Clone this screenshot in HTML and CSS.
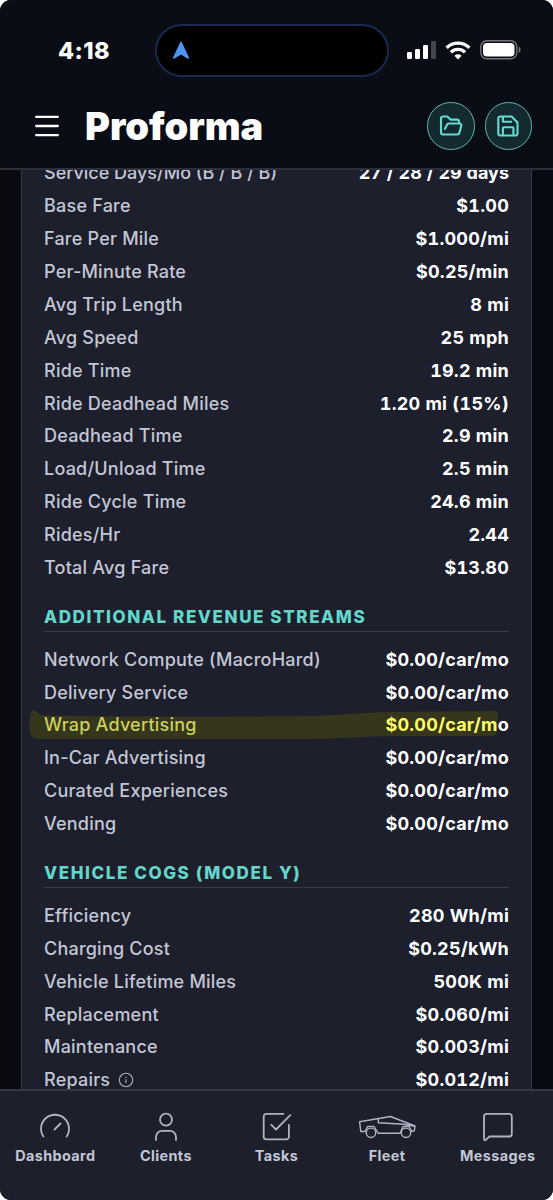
FILE: index.html
```html
<!DOCTYPE html>
<html lang="en">
<head>
  <meta charset="UTF-8">
  <title>Proforma</title>
  <link rel="stylesheet" href="styles.css">
</head>
<body>
  <div class="phone">
    <header class="top">
      <div class="status-bar">
        <span class="time">4:18</span>
        <div class="island">
          <svg width="18" height="19" viewBox="0 0 18 19"><path d="M9 1.4 L16.3 17 L9 12.6 L1.7 17 Z" fill="#4f94f8" stroke="#4f94f8" stroke-width="1.6" stroke-linejoin="round"/></svg>
        </div>
        <div class="indicators">
          <svg width="29" height="19" viewBox="0 0 29 19" fill="#fff">
            <rect x="0" y="11" width="5" height="7" rx="1.3"/>
            <rect x="8" y="8" width="5" height="10" rx="1.3"/>
            <rect x="16" y="4" width="5" height="14" rx="1.3"/>
            <rect x="24" y="0" width="5" height="18" rx="1.3" fill="#44464c"/>
          </svg>
          <svg class="wifi" width="26" height="19" viewBox="0 0 26 19" fill="none" stroke="#fff" stroke-width="3.4">
            <path d="M1.6 6.8 a16.3 16.3 0 0 1 22.8 0"/>
            <path d="M5.9 11.3 a10.2 10.2 0 0 1 14.2 0"/>
            <path d="M13 18.4 L9.4 14.7 a5.3 5.3 0 0 1 7.2 0 Z" fill="#fff" stroke="none"/>
          </svg>
          <svg width="41" height="20" viewBox="0 0 41 20">
            <rect x="0.8" y="0.8" width="36" height="18" rx="6" fill="none" stroke="#75777c" stroke-width="1.4"/>
            <rect x="3" y="3" width="31.5" height="13.6" rx="4" fill="#fff"/>
            <path d="M38.6 6.6 q2 1 2 3.2 t-2 3.2 z" fill="#75777c"/>
          </svg>
        </div>
      </div>
      <div class="title-bar">
        <svg class="menu" width="24" height="22" viewBox="0 0 24 22" stroke="#fff" stroke-width="2.3" stroke-linecap="round"><path d="M1.2 1.8 H22.8 M1.2 11 H22.8 M1.2 20.2 H22.8"/></svg>
        <h1>Proforma</h1>
        <div class="actions">
          <button class="round-btn" aria-label="Open">
            <svg width="24" height="24" viewBox="0 0 24 24"><path d="M5.2 20.5 H3.9 A1.9 1.9 0 0 1 2 18.6 V4.4 A1.9 1.9 0 0 1 3.9 2.5 H8.3 L11.5 5.6 H18.1 A1.9 1.9 0 0 1 20 7.5 V9.5 M5.2 20.5 H18.3 A2.2 2.2 0 0 0 20.4 18.9 L22.3 11.5 A1.6 1.6 0 0 0 20.7 9.5 H9.9 A2.2 2.2 0 0 0 7.9 10.9 L5.9 14.8"/></svg>
          </button>
          <button class="round-btn" aria-label="Save">
            <svg width="24" height="24" viewBox="0 0 24 24"><path d="M4.4 2.5 H15.6 L21.5 8.4 V19.4 A2.1 2.1 0 0 1 19.4 21.5 H4.4 A2.1 2.1 0 0 1 2.3 19.4 V4.6 A2.1 2.1 0 0 1 4.4 2.5 Z M6.9 2.5 V7.7 H15.2 M6.9 21.5 V14.2 A1 1 0 0 1 7.9 13.2 H16.4 A1 1 0 0 1 17.4 14.2 V21.5"/></svg>
          </button>
        </div>
      </div>
    </header>

    <main class="content">
      <section class="card">
        <div class="row tight"><span>Service Days/Mo (B / B / B)</span><b>27 / 28 / 29 days</b></div>
        <div class="row"><span>Base Fare</span><b>$1.00</b></div>
        <div class="row"><span>Fare Per Mile</span><b>$1.000/mi</b></div>
        <div class="row"><span>Per-Minute Rate</span><b>$0.25/min</b></div>
        <div class="row"><span>Avg Trip Length</span><b>8 mi</b></div>
        <div class="row"><span>Avg Speed</span><b>25 mph</b></div>
        <div class="row"><span>Ride Time</span><b>19.2 min</b></div>
        <div class="row"><span>Ride Deadhead Miles</span><b>1.20 mi (15%)</b></div>
        <div class="row"><span>Deadhead Time</span><b>2.9 min</b></div>
        <div class="row"><span>Load/Unload Time</span><b>2.5 min</b></div>
        <div class="row"><span>Ride Cycle Time</span><b>24.6 min</b></div>
        <div class="row"><span>Rides/Hr</span><b>2.44</b></div>
        <div class="row"><span>Total Avg Fare</span><b>$13.80</b></div>

        <h2>ADDITIONAL REVENUE STREAMS</h2>
        <div class="row"><span>Network Compute (MacroHard)</span><b>$0.00/car/mo</b></div>
        <div class="row"><span>Delivery Service</span><b>$0.00/car/mo</b></div>
        <div class="row marked">
          <svg class="marker" width="472" height="32" viewBox="0 0 472 32"><path d="M1 23 C0 16 1 4 3 2 C6 0 9 3 11 6 C60 8 180 8 280 7 C320 6 330 3 370 3 L466 2 Q470 3 469 8 L468 24 Q467 27 462 27 L370 27 C330 27 320 30 280 30 L10 30 Q2 30 1 23 Z"/></svg>
          <span>Wrap Advertising</span><b><em>$0.00/car/m</em>o</b>
        </div>
        <div class="row"><span>In-Car Advertising</span><b>$0.00/car/mo</b></div>
        <div class="row"><span>Curated Experiences</span><b>$0.00/car/mo</b></div>
        <div class="row"><span>Vending</span><b>$0.00/car/mo</b></div>

        <h2>VEHICLE COGS (MODEL Y)</h2>
        <div class="row"><span>Efficiency</span><b>280 Wh/mi</b></div>
        <div class="row"><span>Charging Cost</span><b>$0.25/kWh</b></div>
        <div class="row"><span>Vehicle Lifetime Miles</span><b>500K mi</b></div>
        <div class="row"><span>Replacement</span><b>$0.060/mi</b></div>
        <div class="row"><span>Maintenance</span><b>$0.003/mi</b></div>
        <div class="row">
          <span>Repairs <svg class="info" width="16" height="16" viewBox="0 0 16 16" fill="none" stroke="#a9abba" stroke-width="1.1"><circle cx="8" cy="8" r="6.7"/><path d="M8 7.3 V11 M8 4.7 V5.9"/></svg></span>
          <b>$0.012/mi</b>
        </div>
      </section>
    </main>

    <nav class="tabs">
      <a class="tab">
        <svg width="32" height="30" viewBox="0 0 32 30"><path d="M4.4 24.6 A14 14 0 1 1 27.6 24.6 M15.5 17.5 L21.5 11.5"/></svg>
        Dashboard
      </a>
      <a class="tab">
        <svg width="32" height="30" viewBox="0 0 32 30"><circle cx="16" cy="7.7" r="6"/><path d="M6 28 V24.8 A6 6 0 0 1 12 18.8 H20 A6 6 0 0 1 26 24.8 V28"/></svg>
        Clients
      </a>
      <a class="tab">
        <svg width="32" height="30" viewBox="0 0 32 30"><path d="M23.5 1.8 H6.3 A2.6 2.6 0 0 0 3.7 4.4 V24.8 A2.6 2.6 0 0 0 6.3 27.4 H26.3 A2.6 2.6 0 0 0 28.9 24.8 V13 M11.3 12.8 L16 17.5 L30.3 3.2"/></svg>
        Tasks
      </a>
      <a class="tab">
        <svg class="truck" width="60" height="30" viewBox="0 0 60 30"><path d="M8 19.5 H3.8 L2.6 9.8 L33.5 4.5 L58 14 L57.3 18.8 L54.7 19.3 M21.3 7 V10.8 L47 12.3 L57.6 14.2 M8 19.5 L10.5 14.5 H17 L21.3 21.3 H43 L46 14.5 H52 L55 19.5"/><circle cx="14" cy="20.8" r="4.7"/><circle cx="49" cy="20.8" r="4.7"/></svg>
        Fleet
      </a>
      <a class="tab">
        <svg width="32" height="30" viewBox="0 0 32 30"><path d="M4.5 1.8 H27.3 A2.5 2.5 0 0 1 29.8 4.3 V22 A2.5 2.5 0 0 1 27.3 24.5 H7.5 L3.6 28.2 Q2 28.5 2 26.5 V4.3 A2.5 2.5 0 0 1 4.5 1.8 Z"/></svg>
        Messages
      </a>
    </nav>
  </div>
</body>
</html>
```

FILE: styles.css
```css
* { box-sizing: border-box; }
body {
  margin: 0;
  background: #fff;
  font-family: Inter, "Liberation Sans", sans-serif;
}
.phone {
  display: flex;
  flex-direction: column;
  height: 1200px;
  border-radius: 11px;
  overflow: hidden;
  background: linear-gradient(to right, #090a0c, #070a13 4%);
}

/* header */
.top {
  height: 170px;
  flex: none;
  background: #0a0d15;
  border-bottom: 2px solid #2c2e3b;
}
.status-bar {
  display: flex;
  align-items: center;
  height: 76px;
  padding: 24px 32px 0 58px;
}
.time {
  width: 97px;
  padding-top: 1px;
  font-size: 23.5px;
  font-weight: 800;
  letter-spacing: 0.4px;
  color: #fff;
}
.island {
  display: flex;
  align-items: center;
  width: 234px;
  height: 53px;
  padding-left: 15px;
  border: 2px solid #172a50;
  border-radius: 27px;
  background: #000;
}
.indicators {
  display: flex;
  align-items: center;
  margin-left: auto;
}
.wifi { margin: 0 9px 0 9px; }
.title-bar {
  display: flex;
  align-items: center;
  height: 100px;
  padding: 0 21px 0 35px;
}
h1 {
  margin: 0 0 0 26px;
  font-size: 38px;
  line-height: 48px;
  font-weight: 900;
  letter-spacing: 0;
  color: #fff;
}
.actions {
  display: flex;
  gap: 10px;
  margin-left: auto;
}
.round-btn {
  display: flex;
  align-items: center;
  justify-content: center;
  width: 47.5px;
  height: 47.5px;
  padding: 0;
  border: 1px solid #60b5ac;
  border-radius: 50%;
  background: #142a30;
}
.round-btn path {
  fill: none;
  stroke: #62dccf;
  stroke-width: 2.1;
  stroke-linejoin: round;
  stroke-linecap: round;
}

/* scrolled list */
.content {
  flex: 1;
  min-height: 0;
  overflow: hidden;
  padding: 0 21px;
}
.card {
  margin-top: -34.4px;
  padding: 20px 22px;
  border: 1px solid #343644;
  background: #1d1f2d;
}
.row {
  position: relative;
  display: flex;
  justify-content: space-between;
  align-items: center;
  height: 32.93px;
  font-size: 18px;
  line-height: 22px;
  white-space: nowrap;
}
.row span {
  color: #c3c6d4;
  font-weight: 500;
  letter-spacing: 0.22px;
}
.row b {
  color: #fff;
  font-weight: 650;
  font-variant-numeric: tabular-nums;
  letter-spacing: 0.22px;
}
.tight span, .tight b { letter-spacing: 0; }
.info {
  margin-left: 3px;
  vertical-align: -2px;
}
h2 {
  height: 47.6px;
  margin: 0 0 11px;
  padding-top: 20px;
  border-bottom: 1px solid #383a48;
  font-size: 17px;
  line-height: 24px;
  font-weight: 800;
  letter-spacing: 1.6px;
  color: #65d5ca;
}
.marker {
  position: absolute;
  left: -15px;
  top: 0;
  fill: #35361c;
}
.marked span, .marked b { position: relative; }
.marked span { color: #cbd05a; }
.marked em {
  font-style: normal;
  color: #fdfd66;
}

/* bottom tabs */
.tabs {
  display: grid;
  grid-template-columns: repeat(5, 1fr);
  flex: none;
  height: 111px;
  border-top: 2px solid #343644;
  background: #1d1f2d;
}
.tab {
  display: flex;
  flex-direction: column;
  align-items: center;
  padding-top: 21px;
  font-size: 14.4px;
  line-height: 20px;
  font-weight: 750;
  letter-spacing: 0.4px;
  color: #c3c6d4;
}
.tab svg {
  margin-bottom: 4px;
  fill: none;
  stroke: #b0b3c2;
  stroke-width: 1.8;
  stroke-linecap: round;
  stroke-linejoin: round;
}
.tab .truck { stroke-width: 1.4; }
```
